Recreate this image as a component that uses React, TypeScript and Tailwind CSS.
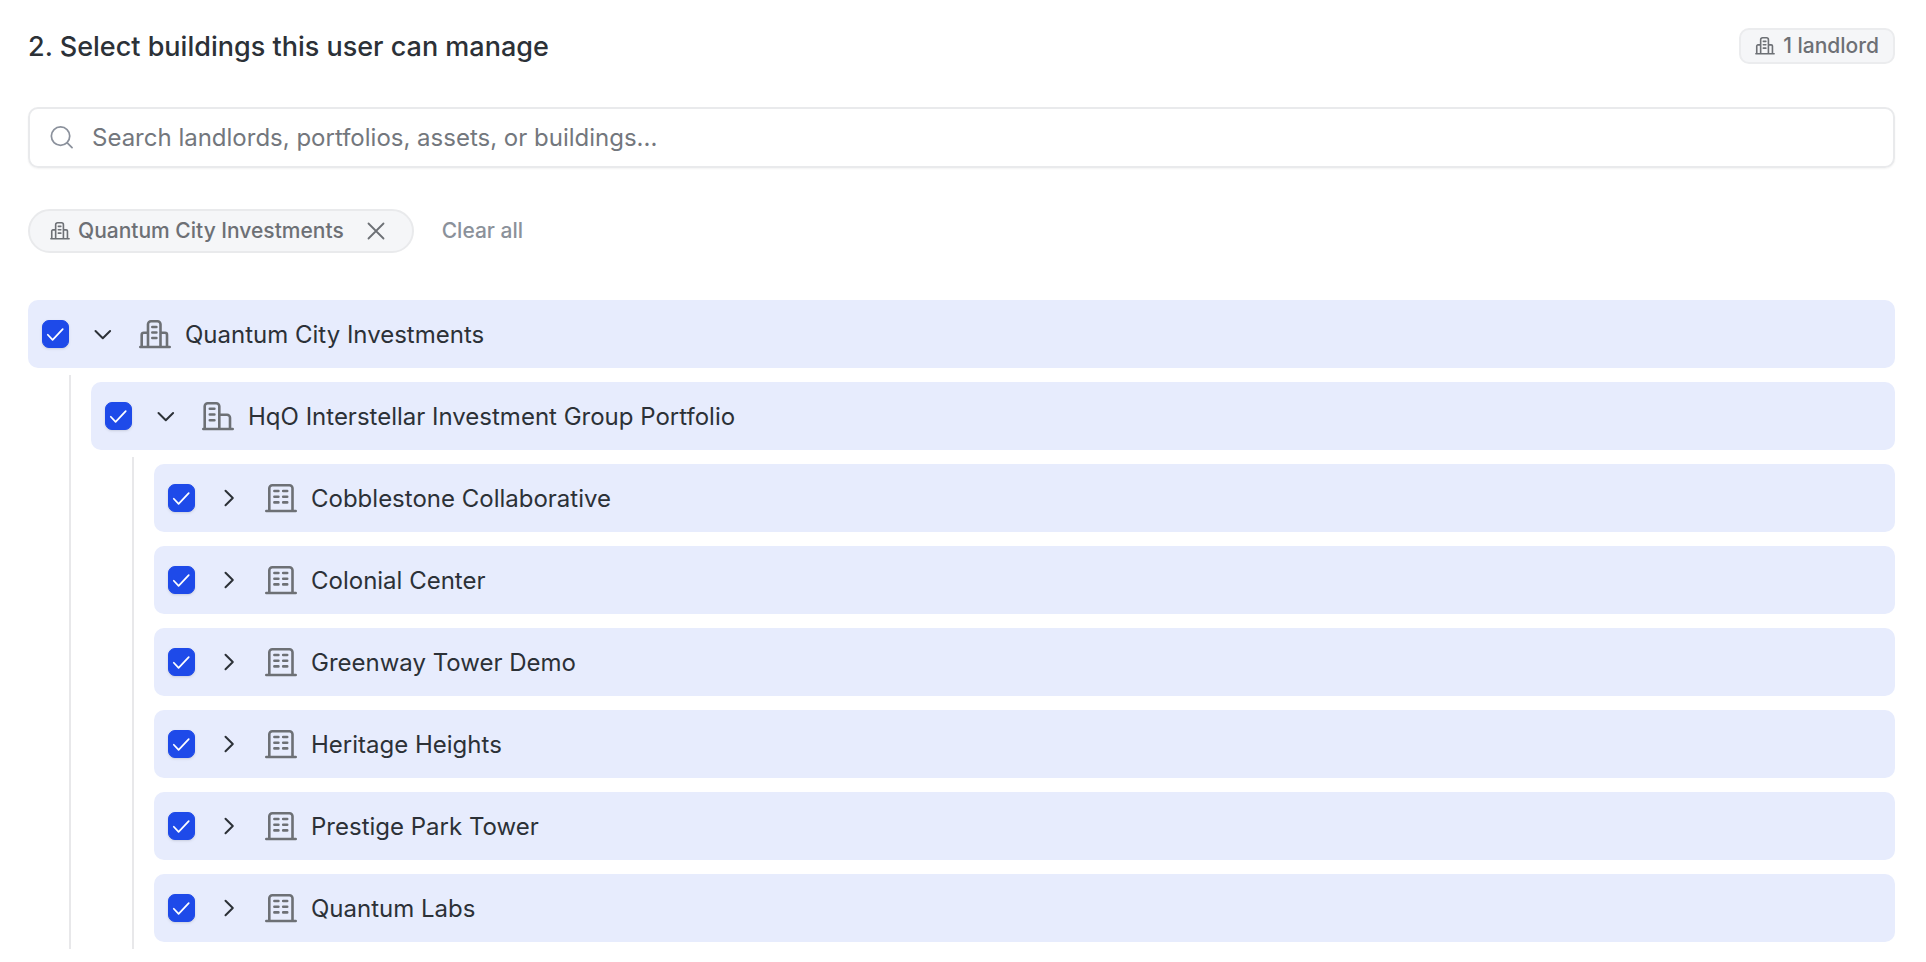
import React, { useState } from 'react';
import clsx from 'clsx';

type NodeKind = 'landlord' | 'portfolio' | 'asset';

interface TreeNode {
  id: string;
  name: string;
  kind: NodeKind;
  children?: TreeNode[];
}

const tree: TreeNode[] = [
  {
    id: 'quantum-city',
    name: 'Quantum City Investments',
    kind: 'landlord',
    children: [
      {
        id: 'hqo-interstellar',
        name: 'HqO Interstellar Investment Group Portfolio',
        kind: 'portfolio',
        children: [
          { id: 'cobblestone', name: 'Cobblestone Collaborative', kind: 'asset' },
          { id: 'colonial', name: 'Colonial Center', kind: 'asset' },
          { id: 'greenway', name: 'Greenway Tower Demo', kind: 'asset' },
          { id: 'heritage', name: 'Heritage Heights', kind: 'asset' },
          { id: 'prestige', name: 'Prestige Park Tower', kind: 'asset' },
          { id: 'quantum-labs', name: 'Quantum Labs', kind: 'asset' },
        ],
      },
    ],
  },
];

const collectIds = (nodes: TreeNode[]): string[] =>
  nodes.flatMap((node) => [node.id, ...collectIds(node.children || [])]);

const iconPaths: Record<NodeKind, string> = {
  landlord:
    'M1.3 27H30.7M9 27V4.3a3 3 0 0 1 3-3h6.5a3 3 0 0 1 3 3V27M2.7 27V14.7a2 2 0 0 1 2-2H9M21.5 12.7H26a2 2 0 0 1 2 2V27M13.3 7H17.4M13.3 12.5H17.4M13.3 18H17.4',
  portfolio:
    'M1.3 27H30.7M2.7 27V4.3a3 3 0 0 1 3-3h8.6a3 3 0 0 1 3 3V27M17.3 12.7H25a3 3 0 0 1 3 3V27M7.8 6.8H12.4M7.8 12.5H12.4M7.8 18.2H12.4',
  asset:
    'M1.3 27H30.7M4.3 27V4.3a3 3 0 0 1 3-3h17.2a3 3 0 0 1 3 3V27M9.4 7H13.4M18.2 7H22.2M9.4 12.7H13.4M18.2 12.7H22.2M9.4 18.4H13.4M18.2 18.4H22.2',
};

const NodeIcon: React.FC<{ kind: NodeKind; className?: string }> = ({ kind, className }) => (
  <svg
    viewBox="0 0 32 29"
    fill="none"
    stroke="currentColor"
    strokeWidth="2.6"
    strokeLinecap="round"
    strokeLinejoin="round"
    className={clsx('shrink-0 text-[#6d7075]', className)}
    aria-hidden="true"
  >
    <path d={iconPaths[kind]} />
  </svg>
);

interface TreeRowProps {
  node: TreeNode;
  selected: string[];
  expanded: string[];
  onSelect: (node: TreeNode) => void;
  onExpand: (id: string) => void;
}

const TreeRow: React.FC<TreeRowProps> = ({ node, selected, expanded, onSelect, onExpand }) => {
  const isSelected = selected.includes(node.id);
  const isExpanded = expanded.includes(node.id);

  return (
    <li>
      <div className="py-[7px]">
        <div
          className={clsx(
            'flex h-[68px] items-center rounded-[10px] pl-3.5',
            isSelected ? 'bg-[#e7ecfd]' : 'hover:bg-gray-50'
          )}
        >
          <span className="grid shrink-0">
            <input
              id={node.id}
              type="checkbox"
              checked={isSelected}
              onChange={() => onSelect(node)}
              className="peer col-start-1 row-start-1 h-7 w-[27px] appearance-none rounded-[7px] border border-gray-300 bg-white shadow-sm checked:border-[#1e4ae9] checked:bg-[#1e4ae9]"
            />
            <svg
              viewBox="0 0 28 28"
              fill="none"
              stroke="currentColor"
              strokeWidth="1.8"
              strokeLinecap="round"
              strokeLinejoin="round"
              className="pointer-events-none invisible col-start-1 row-start-1 h-7 w-[27px] text-white peer-checked:visible"
              aria-hidden="true"
            >
              <path d="M6 14.8L11 20L21.5 9" />
            </svg>
          </span>
          <button
            type="button"
            aria-label={isExpanded ? `Collapse ${node.name}` : `Expand ${node.name}`}
            aria-expanded={isExpanded}
            onClick={() => onExpand(node.id)}
            className="ml-5 flex size-7 shrink-0 items-center justify-center text-[#2c3137]"
          >
            <svg
              viewBox="0 0 28 28"
              fill="none"
              stroke="currentColor"
              strokeWidth="2"
              strokeLinecap="round"
              strokeLinejoin="round"
              className="size-7"
              aria-hidden="true"
            >
              <path d={isExpanded ? 'M6.5 11L13.8 18.3L21.1 11' : 'M10.5 6.7L17.8 14L10.5 21.3'} />
            </svg>
          </button>
          <NodeIcon kind={node.kind} className="ml-[22px] h-[29px] w-8" />
          <label htmlFor={node.id} className="ml-3.5 truncate pt-0.5 text-2xl text-[#2c3137]">
            {node.name}
          </label>
        </div>
      </div>

      {isExpanded && node.children && (
        <ul className="ml-[41px] border-l-2 border-[#e8e8ea] pl-5">
          {node.children.map((child) => (
            <TreeRow
              key={child.id}
              node={child}
              selected={selected}
              expanded={expanded}
              onSelect={onSelect}
              onExpand={onExpand}
            />
          ))}
        </ul>
      )}
    </li>
  );
};

const App: React.FC = () => {
  const [query, setQuery] = useState('');
  const [selected, setSelected] = useState<string[]>(collectIds(tree));
  const [expanded, setExpanded] = useState<string[]>(['quantum-city', 'hqo-interstellar']);

  const landlords = tree.filter((node) => selected.includes(node.id));

  const toggleSelect = (node: TreeNode) => {
    const ids = collectIds([node]);
    setSelected((prev) =>
      prev.includes(node.id) ? prev.filter((id) => !ids.includes(id)) : [...prev, ...ids]
    );
  };

  const toggleExpand = (id: string) => {
    setExpanded((prev) => (prev.includes(id) ? prev.filter((item) => item !== id) : [...prev, id]));
  };

  return (
    <main className="bg-white pt-7 pr-[31px] pl-7 font-['Inter',sans-serif]">
      <header className="flex h-9 items-center justify-between">
        <h2 className="pt-0.5 text-[27px] font-medium text-[#2c3137]">
          2. Select buildings this user can manage
        </h2>
        <span className="flex h-9 items-center gap-2 rounded-[10px] border-2 border-[#ebecee] bg-[#f5f6f8] px-3.5 text-[21px] font-medium text-[#6d7075]">
          <NodeIcon kind="landlord" className="h-[18px] w-5" />
          {landlords.length} landlord
        </span>
      </header>

      <div className="mt-[43px] flex h-[61px] items-center gap-[19px] rounded-[10px] border-2 border-[#e9eaec] px-5 shadow-xs">
        <svg
          viewBox="0 0 24 24"
          fill="none"
          stroke="currentColor"
          strokeWidth="1.8"
          strokeLinecap="round"
          className="size-[23px] shrink-0 text-[#8b919c]"
          aria-hidden="true"
        >
          <circle cx="11" cy="10.5" r="9.6" />
          <path d="M18 17.5L23 22.5" />
        </svg>
        <input
          type="text"
          value={query}
          onChange={(e) => setQuery(e.target.value)}
          aria-label="Search buildings"
          placeholder="Search landlords, portfolios, assets, or buildings..."
          className="h-full flex-1 text-2xl text-[#2c3137] outline-none placeholder:text-[#73777d]"
        />
      </div>

      <div className="mt-[41px] flex h-11 items-center gap-7">
        {landlords.map((landlord) => (
          <span
            key={landlord.id}
            className="flex h-11 items-center rounded-full border-2 border-[#e9eaec] bg-[#f5f6f8] pr-6 pl-5 text-[21px] font-medium text-[#6d7075]"
          >
            <NodeIcon kind="landlord" className="mr-2 h-[18px] w-5" />
            {landlord.name}
            <button
              type="button"
              aria-label={`Remove ${landlord.name}`}
              onClick={() => toggleSelect(landlord)}
              className="ml-5 flex size-6 items-center justify-center"
            >
              <svg
                viewBox="0 0 24 24"
                fill="none"
                stroke="currentColor"
                strokeWidth="1.8"
                strokeLinecap="round"
                className="size-6"
                aria-hidden="true"
              >
                <path d="M4.5 4.5L19.5 19.5M19.5 4.5L4.5 19.5" />
              </svg>
            </button>
          </span>
        ))}
        <button
          type="button"
          onClick={() => setSelected([])}
          className="text-[21px] font-medium text-[#8b919a]"
        >
          Clear all
        </button>
      </div>

      <ul className="mt-10">
        {tree.map((node) => (
          <TreeRow
            key={node.id}
            node={node}
            selected={selected}
            expanded={expanded}
            onSelect={toggleSelect}
            onExpand={toggleExpand}
          />
        ))}
      </ul>
    </main>
  );
};

export default App;
